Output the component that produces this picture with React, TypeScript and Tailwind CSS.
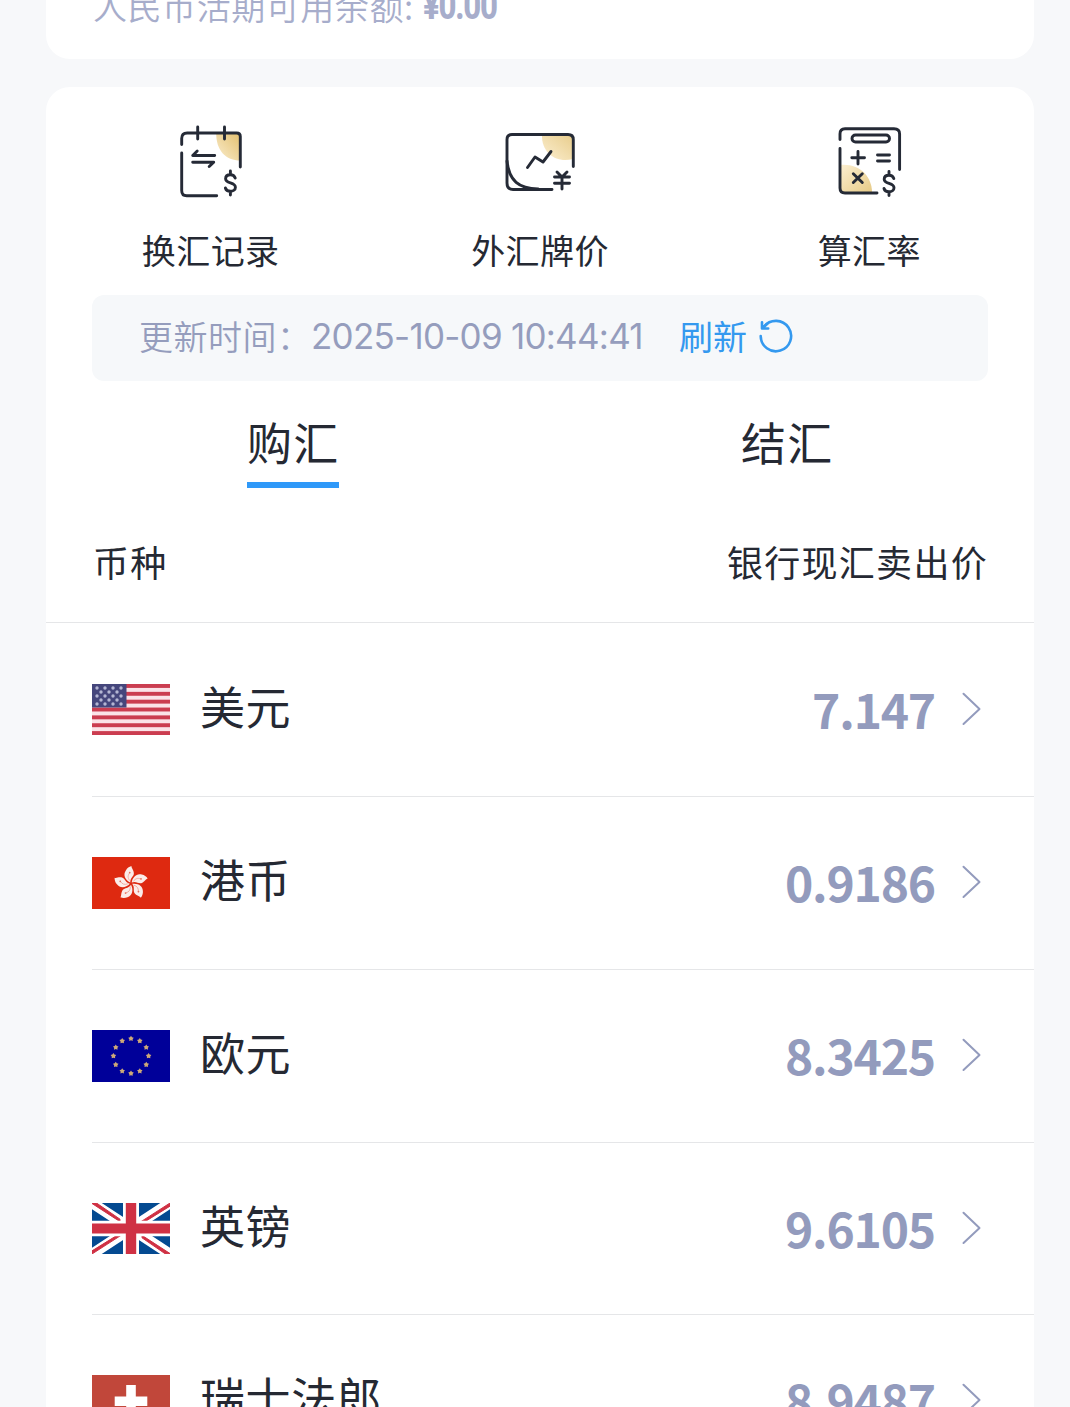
import React, { useState } from 'react';

interface Currency {
  code: string;
  name: string;
  rate: string;
  Flag: React.FC;
}

const FLAG_CLASS = 'block w-[78px] h-[52px] shrink-0';

// Five-pointed star centred on (cx, cy)
const starPoints = (cx: number, cy: number, r: number) =>
  Array.from({ length: 10 }, (_, i) => {
    const radius = i % 2 === 0 ? r : r * 0.6;
    const angle = -Math.PI / 2 + (i * Math.PI) / 5;
    return `${cx + radius * Math.cos(angle)},${cy + radius * Math.sin(angle)}`;
  }).join(' ');

const UsFlag: React.FC = () => (
  <svg viewBox="0 0 78 51" preserveAspectRatio="none" className="block w-[78px] h-[51px] shrink-0">
    <rect width="78" height="51" fill="#fbe3e8" />
    {[0, 1, 2, 3, 4, 5, 6].map((i) => (
      <rect key={i} y={i * 7.85} width="78" height="3.92" fill="#cb3d50" />
    ))}
    <rect width="34.5" height="23.5" fill="#45467c" />
    {[0, 1, 2, 3, 4].map((row) =>
      Array.from({ length: row % 2 === 0 ? 4 : 3 }, (_, col) => (
        <circle
          key={`${row}-${col}`}
          cx={(row % 2 === 0 ? 5 : 9) + col * 8}
          cy={4 + row * 4}
          r="1.7"
          fill="#b4b6d3"
        />
      ))
    )}
  </svg>
);

const HkFlag: React.FC = () => (
  <svg viewBox="0 0 78 52" className={FLAG_CLASS}>
    <rect width="78" height="52" fill="#de2910" />
    {[0, 72, 144, 216, 288].map((angle) => (
      <g key={angle} transform={`translate(39 26.5) rotate(${angle - 5})`}>
        <path
          d="M-.6 -1 C-5.5 -4 -7.5 -9.5 -4 -13.5 C-2.5 -15.6 -.5 -16.8 2 -17.3 C1.5 -15.5 4.2 -13 3.7 -9.5 C3.3 -6.8 -.6 -5.5 -.6 -1 Z"
          fill="#fbece9"
        />
        <path d="M-1 -3 C-3 -6 -2.5 -8.5 -.6 -10.5" fill="none" stroke="#f0a396" strokeWidth=".8" />
        <circle cx="-.3" cy="-11" r=".9" fill="#e7715f" />
      </g>
    ))}
  </svg>
);

const EuFlag: React.FC = () => (
  <svg viewBox="0 0 78 52" className={FLAG_CLASS}>
    <rect width="78" height="52" fill="#009" />
    {Array.from({ length: 12 }, (_, i) => {
      const a = (i * Math.PI) / 6;
      return (
        <polygon
          key={i}
          points={starPoints(39 + 17.6 * Math.sin(a), 26 - 17.4 * Math.cos(a), 2.9)}
          fill="#cda878"
        />
      );
    })}
  </svg>
);

const GbFlag: React.FC = () => (
  <svg viewBox="0 0 78 52" preserveAspectRatio="none" className="block w-[78px] h-[51px] shrink-0">
    <rect width="78" height="52" fill="#044a91" />
    <path d="M0 0 L78 52 M78 0 L0 52" stroke="#fff" strokeWidth="10.8" />
    <path
      d="M0 .5 L28 19 V16.5 L4.5 0 H0 Z M78 0 L49 19 H53 L78 3.2 Z M0 52 L29 33 H25 L0 48.8 Z M78 51.5 L50 33 V35.5 L73.5 52 Z"
      fill="#cf3144"
      stroke="#cf3144"
      strokeWidth="1"
    />
    <path d="M39 0 V52 M0 26 H78" stroke="#fff" strokeWidth="16" />
    <path d="M39 0 V52 M0 26 H78" stroke="#cf3144" strokeWidth="10.4" />
  </svg>
);

const ChFlag: React.FC = () => (
  <svg viewBox="0 0 78 52" className={FLAG_CLASS}>
    <rect width="78" height="52" fill="#c1473a" />
    <path d="M39 10 V42.6 M22.7 26.3 H55.3" stroke="#fff" strokeWidth="9.6" />
  </svg>
);

const currencies: Currency[] = [
  { code: 'USD', name: '美元', rate: '7.147', Flag: UsFlag },
  { code: 'HKD', name: '港币', rate: '0.9186', Flag: HkFlag },
  { code: 'EUR', name: '欧元', rate: '8.3425', Flag: EuFlag },
  { code: 'GBP', name: '英镑', rate: '9.6105', Flag: GbFlag },
  { code: 'CHF', name: '瑞士法郎', rate: '8.9487', Flag: ChFlag },
];

const ICON_CLASS = 'block w-[100px] h-[95px]';

const DollarMark: React.FC<{ x: number; y: number }> = ({ x, y }) => (
  <path
    transform={`translate(${x} ${y})`}
    d="M0 -12 V-8.5 M0 8.5 V12 M4.8 -5 C4 -7.4 2.2 -8.3 0 -8.3 C-2.8 -8.3 -4.8 -6.8 -4.8 -4.3 C-4.8 1 5 -1.2 5 4.2 C5 6.8 2.8 8.3 0 8.3 C-2.6 8.3 -4.4 7.2 -5 5"
  />
);

const RecordIcon: React.FC = () => (
  <svg viewBox="-0.7 -0.5 100 95" className={ICON_CLASS} fill="none" stroke="#252a36" strokeWidth="2.9" strokeLinecap="round" strokeLinejoin="round">
    <defs>
      <linearGradient id="record-gold" x1="1" y1="0" x2="0" y2="1">
        <stop offset="0" stopColor="#e3c06f" />
        <stop offset="1" stopColor="#faedce" />
      </linearGradient>
    </defs>
    <path d="M54.5 18 H78.5 V45 C64 45 54.5 35 54.5 18 Z" fill="url(#record-gold)" stroke="none" />
    <path d="M20 29 V23 Q20 17.5 25.5 17.5 H75 Q78.6 17.5 78.6 21 V51.5 M20 37.5 V75 Q20 80.3 25 80.3 H55" />
    <path d="M36 11.5 V23.5 M62.8 11.5 V23.5" />
    <path d="M53 40 H31 L35.5 35.5 M31 46.7 H52 L47.5 51" />
    <DollarMark x={68.7} y={67.5} />
  </svg>
);

const QuoteIcon: React.FC = () => (
  <svg viewBox="0 0 100 95" className={ICON_CLASS} fill="none" stroke="#252a36" strokeWidth="2.9" strokeLinecap="round" strokeLinejoin="round">
    <defs>
      <linearGradient id="quote-gold" x1="1" y1="0" x2="0" y2="1">
        <stop offset="0" stopColor="#e8cd8c" />
        <stop offset="1" stopColor="#fcefd1" />
      </linearGradient>
    </defs>
    <path d="M52 20 H83 V44 C66 48.5 51.5 38 52 20 Z" fill="url(#quote-gold)" stroke="none" />
    <path d="M83.3 51.5 V24.5 Q83.3 19.5 78 19.5 H22 Q17 19.5 17 24.5 V68 Q17 74.5 23 74.5 H62" />
    <path d="M17 46 C19 66 29 73.5 48 74" />
    <path d="M37.5 52.5 L45 42 L53 47 L61 36.5" />
    <path d="M67 57 L72 62 L77 57 M64.5 62 H79.5 M64.5 68.3 H79.5 M72 62 V74" />
  </svg>
);

const CalculatorIcon: React.FC = () => (
  <svg viewBox="-1 0 100 95" className={ICON_CLASS} fill="none" stroke="#252a36" strokeWidth="2.9" strokeLinecap="round" strokeLinejoin="round">
    <defs>
      <linearGradient id="calc-gold" x1="0" y1="0" x2="1" y2="1">
        <stop offset="0" stopColor="#fcefd1" />
        <stop offset="1" stopColor="#e6ca86" />
      </linearGradient>
    </defs>
    <path d="M20 50 C39 48 52 61 52 77.5 H24 Q20 77.5 20 73 Z" fill="url(#calc-gold)" stroke="none" />
    <path d="M20 24.5 V19 Q20 13.8 25 13.8 H74 Q79.6 13.8 79.6 19 V54.5 M20 33.5 V73 Q20 78 25 78 H57" />
    <rect x="32" y="20" width="37.5" height="7" rx="3.5" />
    <path d="M38 36.5 V49 M31.8 42.8 H44.5 M57.5 40 H69.5 M57.5 46 H69.5 M33.3 58.7 L42.3 67.5 M42.3 58.7 L33.3 67.5" />
    <DollarMark x={69} y={68.5} />
  </svg>
);

const services = [
  { label: '换汇记录', Icon: RecordIcon },
  { label: '外汇牌价', Icon: QuoteIcon },
  { label: '算汇率', Icon: CalculatorIcon },
];

const tabs = ['购汇', '结汇'];

const App: React.FC = () => {
  const [activeTab, setActiveTab] = useState('购汇');

  return (
    <div className="w-[1070px] h-[1407px] overflow-hidden bg-[#f7f8fa] pl-[46px] pr-9 text-[#252933] font-['Noto_Sans_CJK_SC',sans-serif]">
      {/* Balance */}
      <div className="h-[59px] bg-white rounded-b-[24px] pl-[47px] overflow-hidden">
        <div className="flex items-center h-[50px] -mt-[19px] text-[#a7adcb] whitespace-nowrap">
          <span className="text-[34px] tracking-[0.55px] leading-[50px] font-[350]">人民币活期可用余额:</span>
          <span className="ml-[9px] text-[38px] leading-[50px] tracking-[-1.5px] font-extrabold font-['Roboto',sans-serif] origin-left scale-x-[0.82]">¥0.00</span>
        </div>
      </div>

      <div className="mt-7 bg-white rounded-t-[24px] h-[1340px]">
        {/* Services */}
        <div className="grid grid-cols-3 h-[208px] pt-7">
          {services.map(({ label, Icon }) => (
            <button key={label} className="flex flex-col items-center">
              <Icon />
              <span className="mt-[15px] text-[34px] leading-[50px] tracking-[0.4px] whitespace-nowrap">{label}</span>
            </button>
          ))}
        </div>

        {/* Update time */}
        <div className="mx-[46px] h-[86px] rounded-xl bg-[#f6f8fa] flex items-center pl-[47px] pb-1 text-[34px] text-[#959dbd] whitespace-nowrap">
          <span className="w-[172px] -mt-[2px] tracking-[0.5px] font-[350]">更新时间：</span>
          <span className="w-[368px] text-[35px] tracking-[-0.75px] font-['Inter',sans-serif]">2025-10-09 10:44:41</span>
          <button className="flex items-center text-[#3499ef]">
            <span className="-mt-[2px]">刷新</span>
            <svg viewBox="0 0 36 36" className="ml-[11px] w-9 h-9" fill="none" stroke="currentColor" strokeWidth="2.6" strokeLinecap="round" strokeLinejoin="round">
              <path d="M2.7 18 A15.2 15.2 0 1 0 6 8.6" />
              <path d="M4 4.3 V10.5 H10.2 M4.2 10.2 L9 6" />
            </svg>
          </button>
        </div>

        {/* Tabs */}
        <div className="grid grid-cols-2 h-[107px]">
          {tabs.map((tab) => (
            <button key={tab} onClick={() => setActiveTab(tab)} className="flex flex-col items-center pt-[29px]">
              <span className="w-[92px] h-[72px] leading-[64px] text-[45px] tracking-[1.2px] whitespace-nowrap">{tab}</span>
              {activeTab === tab && <span className="w-[92px] h-1.5 bg-[#2f99f9]" />}
            </button>
          ))}
        </div>

        {/* Table header */}
        <div className="flex items-center justify-between h-[135px] pl-[47px] pr-[46px] pt-[12px] border-b border-[#e5e6e8] text-[36px] tracking-[1.3px]">
          <span>币种</span>
          <span>银行现汇卖出价</span>
        </div>

        {/* Rates */}
        <ul className="pl-[46px]">
          {currencies.map(({ code, name, rate, Flag }) => (
            <li key={code} className="flex items-center h-[173px] border-b border-[#e5e6e8] first:h-[174px] nth-[4]:h-[172px]">
              <Flag />
              <span className="ml-[30px] text-[45px] leading-[66px] tracking-[0.6px] -mt-[8px] whitespace-nowrap">{name}</span>
              <span className="ml-auto text-[48px] leading-[70px] -mt-[4px] font-bold text-[#939bbd] tracking-[-1.2px]">{rate}</span>
              <svg viewBox="0 0 20 34" className="ml-[27px] mr-[52px] -mt-[2px] w-5 h-[34px]" fill="none" stroke="#939bbd" strokeWidth="2" strokeLinecap="round" strokeLinejoin="round">
                <path d="M1.5 1.8 L17.5 17 L1.5 32" />
              </svg>
            </li>
          ))}
        </ul>
      </div>
    </div>
  );
};

export default App;
